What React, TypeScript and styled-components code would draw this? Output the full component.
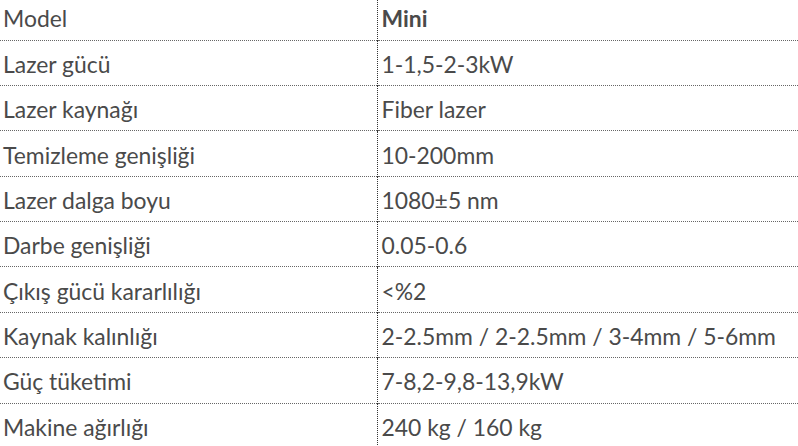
import React from "react";
import styled, { createGlobalStyle } from "styled-components";

const Global = createGlobalStyle`
  html, body { margin: 0; padding: 0; background: #ffffff; }
  body { overflow: hidden; }
`;

const Table = styled.table`
  border-collapse: collapse;
  width: 820px;
  margin-top: -5.4px;
  font-family: "Lato", "Open Sans", sans-serif;
  font-size: 22.9px;
  color: #4a4a4a;
  table-layout: fixed;
`;

const KeyCol = styled.col`
  width: 377px;
`;

const Row = styled.tr`
  height: 45.4px;
  border-bottom: 1px dotted #666;
`;

const Cell = styled.td<{ $first?: boolean; $bold?: boolean }>`
  padding: 3px 0 0 ${(p) => (p.$first ? "3px" : "4px")};
  border-right: ${(p) => (p.$first ? "1px dotted #333" : "none")};
  font-weight: ${(p) => (p.$bold ? 700 : 400)};
  white-space: nowrap;
  vertical-align: middle;
  line-height: 1;
`;

const rows: [string, string][] = [
  ["Model", "Mini"],
  ["Lazer gücü", "1-1,5-2-3kW"],
  ["Lazer kaynağı", "Fiber lazer"],
  ["Temizleme genişliği", "10-200mm"],
  ["Lazer dalga boyu", "1080±5 nm"],
  ["Darbe genişliği", "0.05-0.6"],
  ["Çıkış gücü kararlılığı", "<%2"],
  ["Kaynak kalınlığı", "2-2.5mm / 2-2.5mm / 3-4mm / 5-6mm"],
  ["Güç tüketimi", "7-8,2-9,8-13,9kW"],
  ["Makine ağırlığı", "240 kg / 160 kg"],
];

export default function App() {
  return (
    <>
      <Global />
      <Table>
        <colgroup>
          <KeyCol />
          <col />
        </colgroup>
        <tbody>
          {rows.map(([k, v], i) => (
            <Row key={k}>
              <Cell $first>{k}</Cell>
              <Cell $bold={i === 0}>{v}</Cell>
            </Row>
          ))}
        </tbody>
      </Table>
    </>
  );
}
